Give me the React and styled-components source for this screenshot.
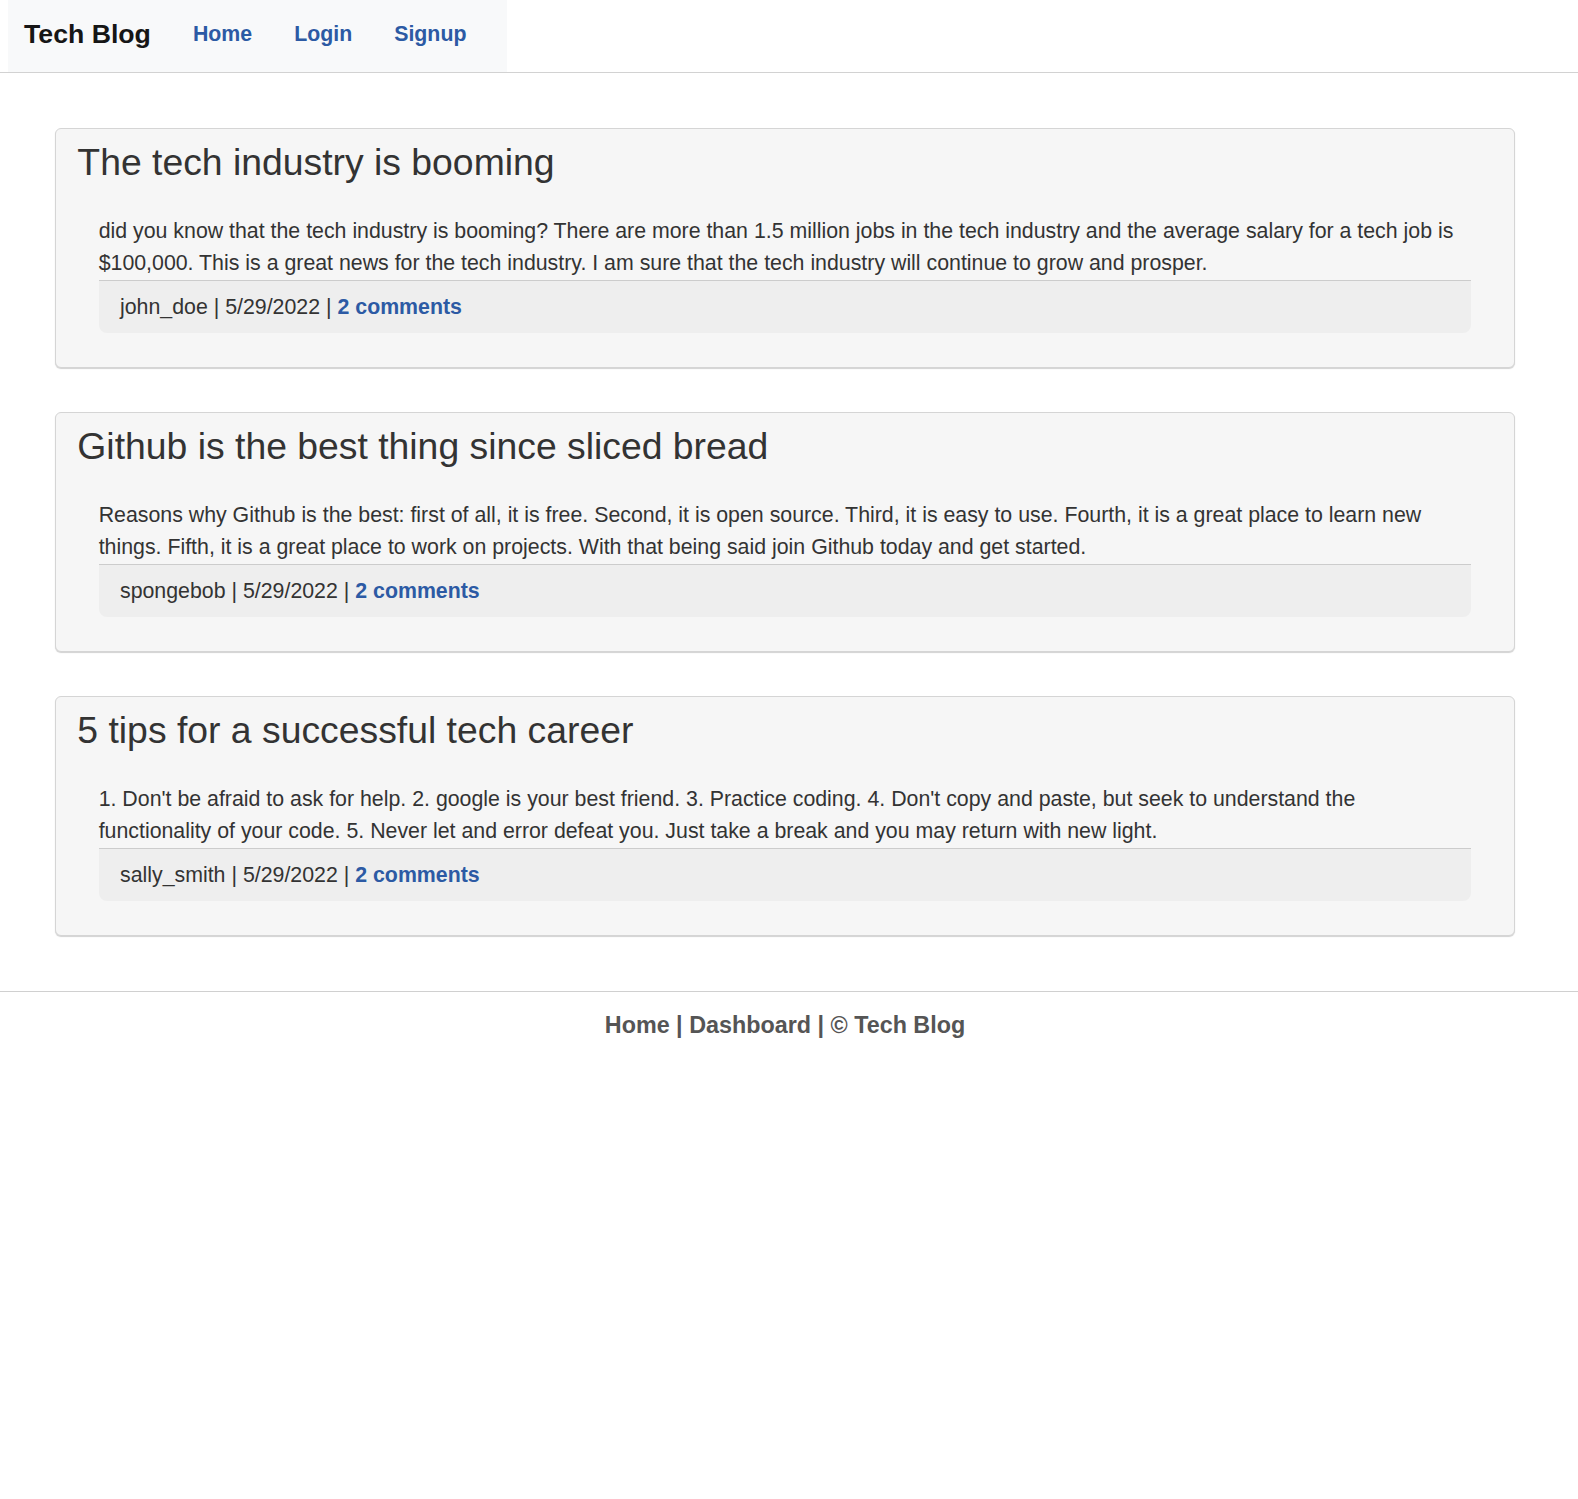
import React from 'react';
import styled, { createGlobalStyle } from 'styled-components';

const GlobalStyle = createGlobalStyle`
  html, body {
    margin: 0;
    padding: 0;
    background: #ffffff;
  }
  body {
    font-family: "Liberation Sans", Arial, Helvetica, sans-serif;
    color: #333333;
    font-size: 21.33px;
  }
`;

const Header = styled.header`
  border-bottom: 1px solid #d2d2d2;
`;

const Nav = styled.nav`
  display: inline-flex;
  align-items: center;
  gap: 42px;
  height: 72px;
  box-sizing: border-box;
  margin-left: 8px;
  padding: 0 41px 4px 16px;
  background: #f8f9fa;
`;

const Brand = styled.a`
  font-weight: 700;
  font-size: 26.67px;
  color: #161616;
  text-decoration: none;
`;

const NavLink = styled.a`
  font-weight: 700;
  font-size: 21.33px;
  color: #2c5aa4;
  text-decoration: none;
`;

const Main = styled.main`
  padding: 55px 63px 10px 55px;
`;

const Card = styled.article`
  background: #f6f6f6;
  border: 1px solid #d5d5d5;
  border-radius: 6px;
  box-shadow: 0 1px 1px rgba(0, 0, 0, 0.18);
  padding: 10.67px 21.33px 34px;
  margin-bottom: 44.25px;
`;

const Title = styled.h3`
  margin: 0 0 30.5px;
  font-size: 37.33px;
  line-height: 1.2;
  font-weight: 400;
  color: #333333;
`;

const Body = styled.div`
  padding: 0 21.33px;
`;

const Content = styled.p`
  margin: 0;
  font-size: 21.33px;
  line-height: 32px;
  color: #333333;
`;

const Meta = styled.div`
  margin-top: 1px;
  border-top: 1px solid #cccccc;
  background: #eeeeee;
  border-radius: 0 0 8px 8px;
  padding: 10px 21.33px;
  font-size: 21.33px;
  line-height: 32px;
  color: #333333;
`;

const CommentLink = styled.a`
  font-weight: 700;
  color: #2c5aa4;
  text-decoration: none;
`;

const Footer = styled.footer`
  border-top: 1px solid #d0d0d0;
  padding: 16px 8px 0 0;
  text-align: center;
  font-weight: 700;
  font-size: 23.33px;
  line-height: 35px;
  color: #555555;
`;

const FooterLink = styled.a`
  color: #555555;
  text-decoration: none;
`;

const posts = [
  {
    title: 'The tech industry is booming',
    content:
      'did you know that the tech industry is booming? There are more than 1.5 million jobs in the tech industry and the average salary for a tech job is $100,000. This is a great news for the tech industry. I am sure that the tech industry will continue to grow and prosper.',
    author: 'john_doe',
    date: '5/29/2022',
    comments: 2,
  },
  {
    title: 'Github is the best thing since sliced bread',
    content:
      'Reasons why Github is the best: first of all, it is free. Second, it is open source. Third, it is easy to use. Fourth, it is a great place to learn new things. Fifth, it is a great place to work on projects. With that being said join Github today and get started.',
    author: 'spongebob',
    date: '5/29/2022',
    comments: 2,
  },
  {
    title: '5 tips for a successful tech career',
    content:
      "1. Don't be afraid to ask for help. 2. google is your best friend. 3. Practice coding. 4. Don't copy and paste, but seek to understand the functionality of your code. 5. Never let and error defeat you. Just take a break and you may return with new light.",
    author: 'sally_smith',
    date: '5/29/2022',
    comments: 2,
  },
];

function PostCard({ post }) {
  return (
    <Card>
      <Title>{post.title}</Title>
      <Body>
        <Content>{post.content}</Content>
        <Meta>
          {post.author} | {post.date} |{' '}
          <CommentLink href="#">{post.comments} comments</CommentLink>
        </Meta>
      </Body>
    </Card>
  );
}

export default function App() {
  return (
    <>
      <GlobalStyle />
      <Header>
        <Nav>
          <Brand href="#">Tech Blog</Brand>
          <NavLink href="#">Home</NavLink>
          <NavLink href="#">Login</NavLink>
          <NavLink href="#">Signup</NavLink>
        </Nav>
      </Header>
      <Main>
        {posts.map((post) => (
          <PostCard key={post.title} post={post} />
        ))}
      </Main>
      <Footer>
        <FooterLink href="#">Home</FooterLink> | <FooterLink href="#">Dashboard</FooterLink> | © Tech Blog
      </Footer>
    </>
  );
}
